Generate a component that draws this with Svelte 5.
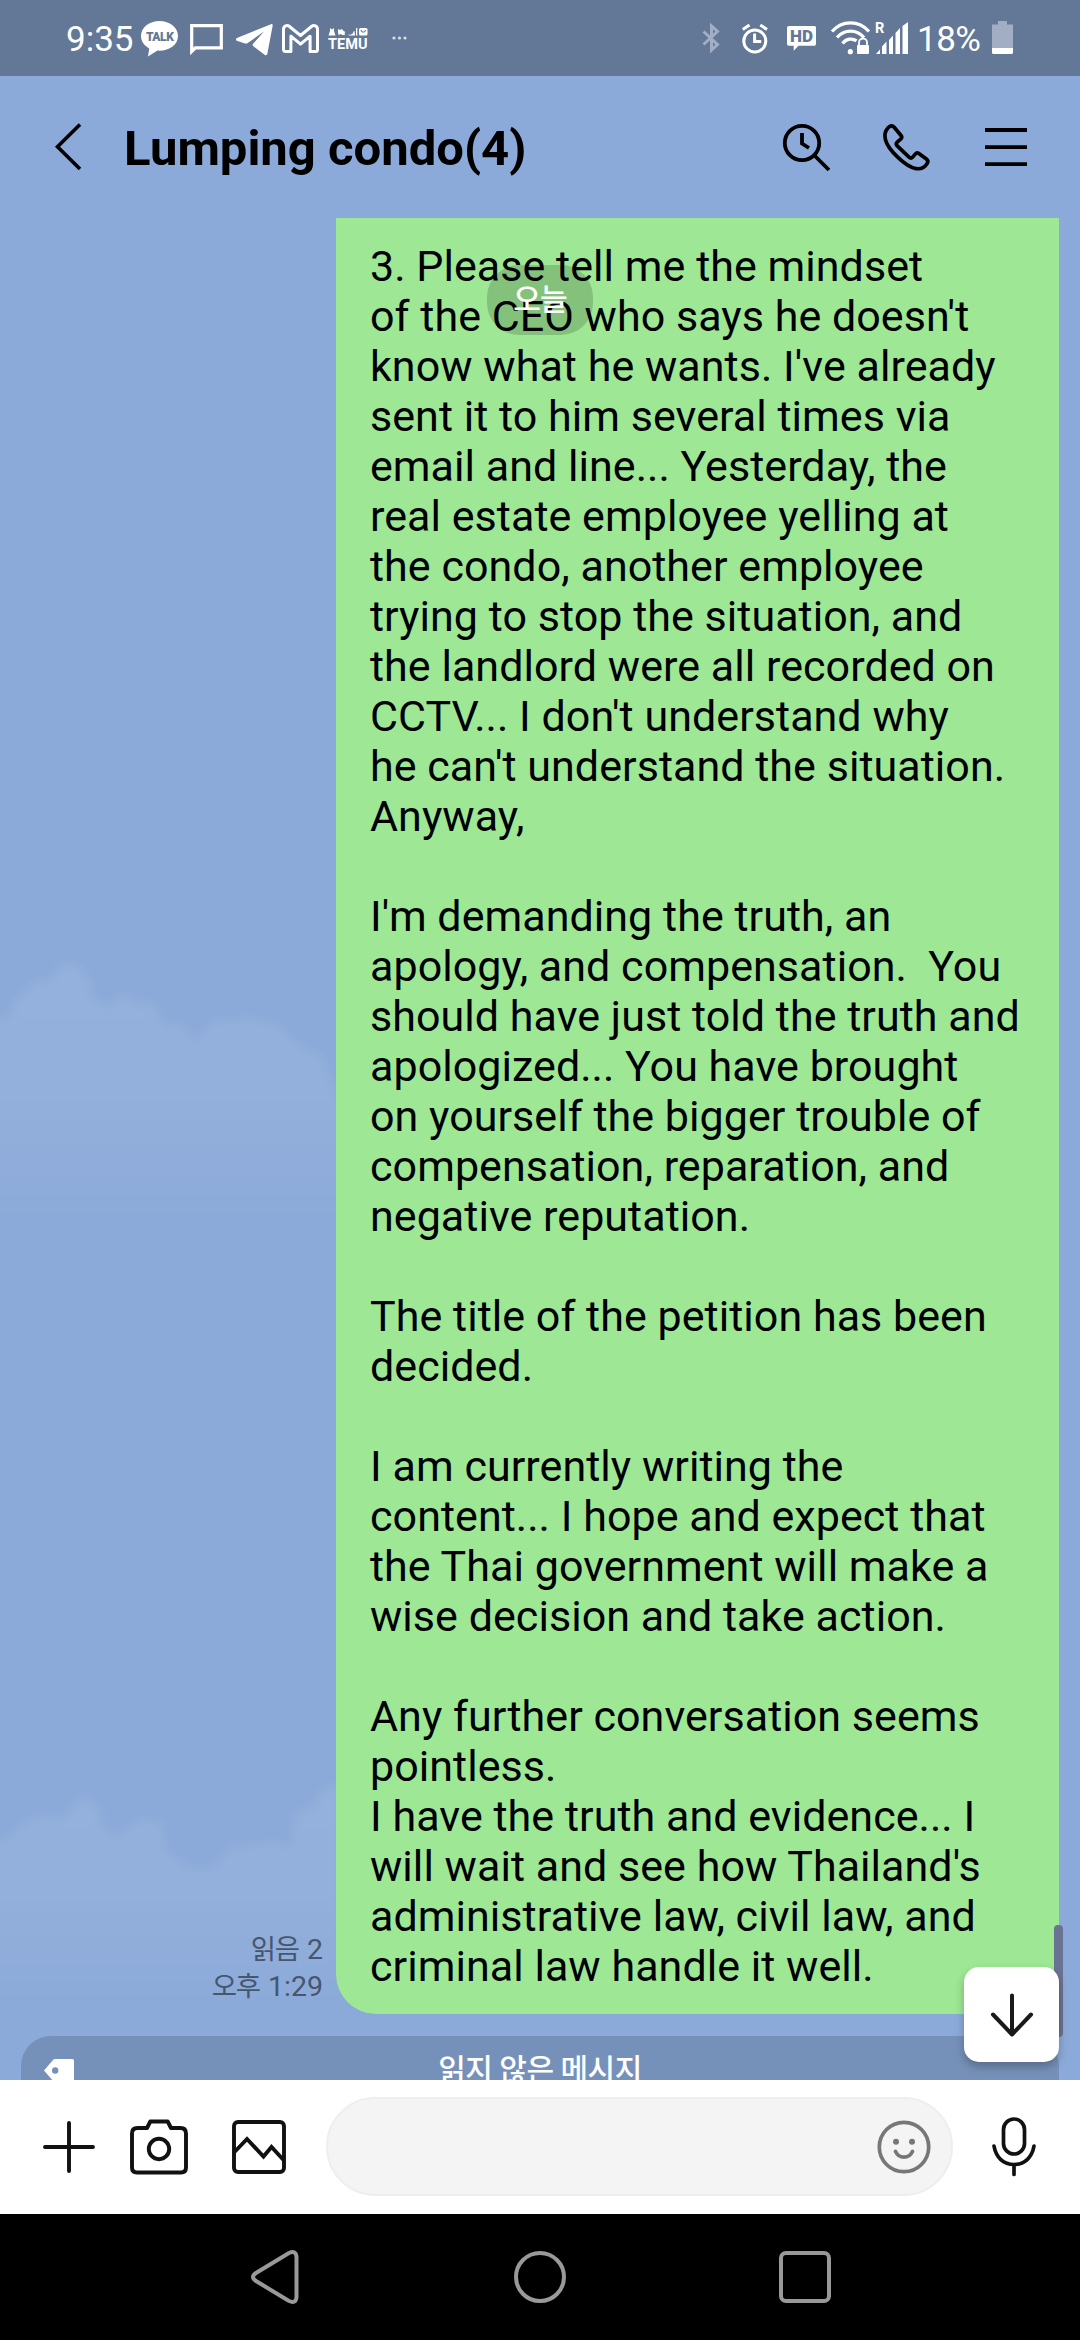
<script lang="ts">
  interface Props {
    title?: string;
    members?: number;
  }

  const { title = 'Lumping condo', members = 4 }: Props = $props();

  const lines = [
    '3. Please tell me the mindset',
    "of the CEO who says he doesn't",
    "know what he wants. I've already",
    'sent it to him several times via',
    'email and line... Yesterday, the',
    'real estate employee yelling at',
    'the condo, another employee',
    'trying to stop the situation, and',
    'the landlord were all recorded on',
    "CCTV... I don't understand why",
    "he can't understand the situation.",
    'Anyway,',
    '',
    "I'm demanding the truth, an",
    'apology, and compensation.  You',
    'should have just told the truth and',
    'apologized... You have brought',
    'on yourself the bigger trouble of',
    'compensation, reparation, and',
    'negative reputation.',
    '',
    'The title of the petition has been',
    'decided.',
    '',
    'I am currently writing the',
    'content... I hope and expect that',
    'the Thai government will make a',
    'wise decision and take action.',
    '',
    'Any further conversation seems',
    'pointless.',
    'I have the truth and evidence... I',
    "will wait and see how Thailand's",
    'administrative law, civil law, and',
    'criminal law handle it well.',
  ];
</script>

<div class="screen">
  <div class="status-bar">
    <div class="status-left">
      <span class="clock">9:35</span>
      <svg class="talk" width="37" height="36" viewBox="0 0 37 36">
        <path d="M18.500 0C8.300 0 0 6.500 0 15c0 5.300 3.300 9.700 8.200 12.400L7 35.600l9.500-6 2 .1C28.700 29.700 37 23.500 37 15S28.700 0 18.500 0z" fill="#fff" />
        <text x="18.700" y="20" text-anchor="middle">TALK</text>
      </svg>
      <svg class="msg" width="33" height="31" viewBox="0 0 33 31">
        <path d="M1.700 27.500V1.700h29.600v22.100H5.400z" fill="none" stroke="#fff" stroke-width="3.200" />
      </svg>
      <svg class="telegram" width="37" height="32" viewBox="0 0 37 32">
        <path d="M35 .2 1.500 13.800c-2 .8-2 2.600 0 3.300l7.500 2.300c1 .3 1.800.2 2.700-.4L28 7.600 17.300 19.500c-.9 1-1 2 .1 2.800l11.200 8.500c1.300 1 2.500.5 2.800-1.200L36.600 2c.3-1.500-.4-2.300-1.600-1.800z" fill="#fff" />
      </svg>
      <svg class="gmail" width="37" height="29" viewBox="0 0 37 29">
        <path d="M1.500 25.500V5.500c0-3.600 3.500-5 6-3l11 9 11-9c2.500-2 6-.6 6 3v20c0 1.200-.7 2-1.900 2h-5.500V12.200l-9.600 8-9.600-8v15.300H3.400c-1.200 0-1.900-.8-1.900-2z" fill="none" stroke="#fff" stroke-width="3" stroke-linejoin="round" />
      </svg>
      <svg class="temu" width="40" height="22" viewBox="0 0 40 22">
        <path d="M2 0l2 1.500L6 0v3l1.500 4.500h-7L2 3zM10 1l2 1 2-1 1.500 2 2 1-1 1 .5 2h-3l-1-1-2.500 1-.5-3zM20 6.500c2.500 1 5-.3 5.500-3l1-.5.500 4.500h-6zM28 0h1.300v7.500H28z" fill="#fff" />
        <rect x="31" y="0" width="8.500" height="7.500" rx="1.500" fill="#fff" />
        <path d="M33 2c.5 3 4 3 4.500 0" fill="none" stroke="#637797" stroke-width="1.100" />
        <text x="0" y="21.300" textLength="39.500" lengthAdjust="spacingAndGlyphs">TEMU</text>
      </svg>
      <svg class="dots" width="15" height="4" viewBox="0 0 15 4">
        <circle cx="2" cy="2" r="1.600" /><circle cx="7.500" cy="2" r="1.600" /><circle cx="13" cy="2" r="1.600" />
      </svg>
    </div>

    <div class="status-right">
      <svg class="bluetooth" width="18" height="30" viewBox="0 0 18 30">
        <path d="M1.500 8.500l14 13L9.500 27V3l6 5.500-14 13" fill="none" stroke="#a1aec3" stroke-width="3" />
      </svg>
      <svg class="alarm" width="26" height="30" viewBox="0 0 26 30">
        <g fill="none" stroke="#fff" stroke-width="3">
          <circle cx="12.800" cy="17" r="11" />
          <path d="M12.600 9.500v8h6.600M.8 5.500 7.500 1M25 5.500 18.300 1" />
        </g>
      </svg>
      <svg class="hd" width="30" height="26" viewBox="0 0 30 26">
        <path d="M2 0h25.500c1 0 1.500.7 1.500 1.800v16c0 1.200-.6 2-1.600 2H11.500l-4.800 5v-5H2c-1.200 0-2-.8-2-2v-16C0 .7.800 0 2 0z" fill="#fff" />
        <text x="14.500" y="15.900" text-anchor="middle">HD</text>
      </svg>
      <svg class="wifi" width="39" height="34" viewBox="0 0 39 34">
        <g fill="none" stroke="#fff" stroke-width="3.300">
          <path d="M1 10.500C11-1 28-1 38 10.500" />
          <path d="M6 16.500c7.500-8.500 19.500-8.500 27 0" />
          <path d="M11.500 22.500c4-5 10-5.600 14-2.600" />
        </g>
        <circle cx="19.300" cy="30.700" r="2.600" fill="#fff" />
        <path d="M28 24v-2.500a4 4 0 0 1 8 0V24" fill="none" stroke="#fff" stroke-width="1.800" />
        <rect x="26" y="24" width="12" height="9" rx="1" fill="#fff" />
      </svg>
      <svg class="signal" width="34" height="33" viewBox="0 0 34 33">
        <text x="0" y="10.500">R</text>
        <path d="M1 32l4-4.500V32zM7 32v-7.500l4.500-5V32zM14 32V18l4-4.500V32zM20.500 32V11l4.500-5v26zM27.500 32V4L33 0v32z" fill="#fff" />
      </svg>
      <span class="percent">18%</span>
      <svg class="battery" width="21" height="33" viewBox="0 0 21 33">
        <path d="M6 0h9v3.500h6V27H0V3.500h6z" fill="#a1aec3" />
        <path d="M0 27h21v4.500q0 1.500-1.500 1.500h-18Q0 33 0 31.500z" fill="#fff" />
      </svg>
    </div>
  </div>

  <header class="chat-header">
    <svg class="back" width="27" height="48" viewBox="0 0 27 48">
      <path d="M25 1.500 2.500 23.700 25 46" fill="none" stroke="#000" stroke-width="3.600" />
    </svg>
    <h1 class="chat-title">{title}({members})</h1>
    <div class="header-actions">
      <svg width="48" height="48" viewBox="0 0 48 48">
        <g fill="none" stroke="#000" stroke-width="3.800">
          <circle cx="19" cy="20" r="17.200" />
          <path d="M19 10v10.500l7 4.500M31.500 32.500 46 47" />
        </g>
      </svg>
      <svg class="call" width="48" height="48" viewBox="0 0 48 48">
        <path d="M4.700 5.200C7 2.300 9.300 2 11.200 4.300l6.800 8.200c1.100 1.400 1 2.300-.1 3.400l-3.700 3.300c-1.300 1.200-1.300 2.200-.2 3.500L26 34.200c1.500 1.300 2.500 1.200 3.700-.1l2.500-3c1.200-1.500 2.200-1.700 3.700-.6l7.500 5.600c1.600 1.200 1.800 2.700.8 4.300-2.400 4.200-6.400 5.900-11.200 5.200C22.500 44 4.800 26.500 2.400 16.500c-1-4.300-.2-8.500 2.300-11.300z" fill="none" stroke="#000" stroke-width="3.700" stroke-linejoin="round" />
      </svg>
      <svg class="menu" width="42" height="48" viewBox="0 0 42 48">
        <path d="M0 7h42M0 24.100h42M0 41.200h42" stroke="#000" stroke-width="3.800" />
      </svg>
    </div>
  </header>

  <main class="chat">
    <svg class="clouds" width="1080" height="1862" viewBox="0 0 1080 1862">
      <defs>
        <linearGradient id="haze" x1="0" y1="0" x2="0" y2="1">
          <stop offset="0" stop-color="#fff" stop-opacity=".07" />
          <stop offset=".5" stop-color="#fff" stop-opacity=".06" />
          <stop offset="1" stop-color="#fff" stop-opacity="0" />
        </linearGradient>
        <filter id="soft"><feGaussianBlur stdDeviation="4" /></filter>
      </defs>
      <g fill="url(#haze)" filter="url(#soft)">
        <path d="M-20 800 8 800 14 784 34 764 50 762 58 748 76 746 90 762 92 778 108 788 118 780 130 778 140 786 154 784 164 806 184 808 194 824 212 804 250 800 278 808 300 828 322 838 336 874 350 920V1010H-20z" />
        <path d="M-20 1630 8 1618 32 1600 68 1598 76 1582 90 1580 100 1592 104 1612 120 1618 140 1602 162 1604 166 1634 190 1650 212 1650 230 1630 276 1624 290 1630 296 1594 312 1590 320 1574 340 1566V1790H-20z" />
      </g>
    </svg>

    <div class="message">
      <div class="message-meta">
        <span>읽음 <b>2</b></span>
        <span>오후 <b>1:29</b></span>
      </div>
      <div class="bubble">
        {#each lines as line}
          <p class="bubble-line">{line}</p>
        {/each}
      </div>
    </div>

    <div class="unread">
      <svg class="tag" width="30" height="34" viewBox="0 0 30 34">
        <path fill-rule="evenodd" d="M0 11.500 9 1q.8-1 2-1h17.500Q30 0 30 1.500V23H10z M8 11.500a3.200 3.200 0 1 0 6.400 0a3.200 3.200 0 1 0-6.400 0z" fill="#fff" />
      </svg>
      <span class="unread-label">읽지 않은 메시지</span>
    </div>

    <div class="date-pill">오늘</div>
    <div class="scroll-thumb"></div>
    <button class="jump-down" aria-label="아래로">
      <svg width="44" height="44" viewBox="0 0 44 44">
        <path d="M22 2.500V41M3 21.500 22 41.500l19-20" fill="none" stroke="#1a1a1a" stroke-width="4" stroke-linecap="round" stroke-linejoin="round" />
      </svg>
    </button>
  </main>

  <div class="composer">
    <svg class="plus" width="52" height="52" viewBox="0 0 52 52">
      <path d="M26 2v48M2 26h48" stroke="#111" stroke-width="3.900" stroke-linecap="round" />
    </svg>
    <svg class="camera" width="58" height="56" viewBox="0 0 58 56">
      <g fill="none" stroke="#111" stroke-width="3.900" stroke-linejoin="round">
        <path d="M7.500 9H17l3.300-6.500h17.400L41 9h9.500q5.500 0 5.500 5.500v34q0 5-5 5H7q-5 0-5-5v-34Q2 9 7.500 9z" />
        <circle cx="29" cy="30" r="10.200" />
      </g>
    </svg>
    <svg class="gallery" width="54" height="54" viewBox="0 0 54 54">
      <g fill="none" stroke="#111" stroke-width="3.900">
        <rect x="2" y="2" width="50" height="50" rx="4" />
        <path d="M2.500 32 15 19l16.500 17.500 8-9.500L52 40.500" />
      </g>
    </svg>
    <div class="input">
      <svg width="54" height="54" viewBox="0 0 54 54">
        <g fill="none" stroke="#777" stroke-width="3.700" stroke-linecap="round">
          <circle cx="27" cy="27" r="24.700" />
          <path d="M18.500 31.500c3.500 7.500 13.500 7.500 17 0" />
        </g>
        <circle cx="19" cy="21.700" r="3" fill="#777" />
        <circle cx="35" cy="21.700" r="3" fill="#777" />
      </svg>
    </div>
    <svg class="mic" width="44" height="60" viewBox="0 0 44 60">
      <g fill="none" stroke="#111" stroke-width="3.700" stroke-linecap="round">
        <rect x="11.500" y="2" width="21" height="35" rx="10.500" />
        <path d="M2 29c2 11.500 9.500 18.500 20 18.500S40 40.500 42 29M22 48v9.500" />
      </g>
    </svg>
  </div>

  <nav class="system-nav">
    <svg width="54" height="54" viewBox="0 0 54 54">
      <path d="M41 3 8 23q-6 4 0 8l33 20q7 3 7.500-4V7q-.5-7-7.500-4z" fill="none" stroke="#999" stroke-width="4" />
    </svg>
    <svg width="54" height="54" viewBox="0 0 54 54">
      <circle cx="27" cy="27" r="24" fill="none" stroke="#999" stroke-width="4" />
    </svg>
    <svg width="54" height="54" viewBox="0 0 54 54">
      <rect x="3" y="3" width="48" height="48" rx="5" fill="none" stroke="#999" stroke-width="4" />
    </svg>
  </nav>
</div>

<style>
  :global(body) {
    background: #000;
  }

  .screen {
    display: flex;
    flex-direction: column;
    width: 1080px;
    height: 2340px;
    overflow: hidden;
    font-family: Roboto, "Noto Sans CJK KR", sans-serif;
    background: #8caad9;
  }

  svg {
    display: block;
    flex-shrink: 0;
    overflow: visible;
  }

  .status-bar {
    display: flex;
    justify-content: space-between;
    height: 76px;
    flex-shrink: 0;
    box-sizing: border-box;
    padding: 0 67px 0 66px;
    background: #637797;
    color: #fff;
  }

  .status-left,
  .status-right {
    display: flex;
    align-items: flex-start;
  }

  .clock,
  .percent {
    font-size: 35px;
    line-height: 41px;
    padding-top: 19px;
  }

  .clock { width: 75px; }
  .percent { margin-left: 8px; width: 75px; letter-spacing: -0.5px; }

  .talk { margin-top: 21px; }
  .talk text { font-size: 12px; font-weight: 900; letter-spacing: -0.4px; fill: #637797; }
  .msg { margin: 24px 0 0 12px; }
  .telegram { margin: 24px 0 0 13px; }
  .gmail { margin: 24px 0 0 9px; }
  .temu { margin: 28px 0 0 9px; }
  .temu text { font-size: 14px; font-weight: 700; fill: #fff; }
  .dots { margin: 36px 0 0 24px; fill: #d8dde5; }

  .bluetooth { margin-top: 23px; }
  .alarm { margin: 24px 0 0 22px; }
  .hd { margin: 26px 0 0 19px; }
  .hd text { font-size: 17px; font-weight: 900; fill: #637797; }
  .wifi { margin: 21px 0 0 14px; }
  .signal { margin: 22px 0 0 5px; }
  .signal text { font-size: 14.5px; font-weight: 700; fill: #fff; }
  .battery { margin-top: 21px; }

  .chat-header {
    display: flex;
    align-items: flex-start;
    height: 142px;
    flex-shrink: 0;
    box-sizing: border-box;
    padding: 47px 53px 0 55px;
  }

  .chat-title {
    flex: 1;
    margin: 1px 0 0 42px;
    font-size: 49px;
    font-weight: 700;
    line-height: 50px;
    color: #000;
  }

  .header-actions {
    display: flex;
  }

  .call { margin-left: 52px; }
  .menu { margin-left: 54px; }

  .chat {
    position: relative;
    flex: 1;
    overflow: hidden;
  }

  .clouds {
    position: absolute;
    inset: 0;
  }

  .message {
    position: relative;
    display: flex;
    justify-content: flex-end;
    align-items: flex-end;
    padding-right: 21px;
  }

  .message-meta {
    display: flex;
    flex-direction: column;
    align-items: flex-end;
    margin: 0 13px 9px 0;
    font-size: 27.5px;
    line-height: 37px;
    letter-spacing: -1.2px;
    word-spacing: 1.5px;
    color: #46566f;
  }

  .message-meta b {
    margin-left: 1px;
    font-size: 28.5px;
    font-weight: 400;
    letter-spacing: 0;
  }

  .bubble {
    width: 723px;
    box-sizing: border-box;
    padding: 23px 0 23px 34px;
    border-radius: 0 0 40px 40px;
    background: #9ee794;
  }

  .bubble-line {
    height: 50px;
    margin: 0;
    font-size: 43px;
    line-height: 50px;
    letter-spacing: 0.05px;
    white-space: pre;
    color: #000;
  }

  .unread {
    position: relative;
    display: flex;
    justify-content: center;
    height: 88px;
    margin: 22px 21px 0;
    border-radius: 30px;
    background: #7691b9;
    color: #fff;
  }

  .tag {
    position: absolute;
    left: 23px;
    top: 23px;
  }

  .unread-label {
    padding-top: 14px;
    font-size: 30px;
    font-weight: 500;
    line-height: 40px;
    letter-spacing: -0.5px;
  }

  .date-pill {
    position: absolute;
    left: 487px;
    top: 47px;
    width: 106px;
    height: 70px;
    border-radius: 32px;
    background: rgba(0, 0, 0, 0.16);
    font-size: 30px;
    font-weight: 500;
    line-height: 70px;
    letter-spacing: -0.8px;
    text-align: center;
    color: #fff;
  }

  .scroll-thumb {
    position: absolute;
    right: 17px;
    top: 1707px;
    width: 9px;
    height: 112px;
    border-radius: 4px;
    background: #6a7391;
  }

  .jump-down {
    position: absolute;
    right: 21px;
    top: 1749px;
    display: flex;
    align-items: center;
    justify-content: center;
    width: 95px;
    height: 95px;
    padding: 0;
    border: none;
    border-radius: 15px;
    background: #fff;
    box-shadow: 0 5px 10px rgba(0, 0, 0, 0.25);
  }

  .composer {
    display: flex;
    align-items: center;
    height: 134px;
    flex-shrink: 0;
    box-sizing: border-box;
    padding: 0 44px 0 43px;
    background: #fff;
  }

  .camera { margin-left: 35px; }
  .gallery { margin-left: 44px; }

  .input {
    display: flex;
    align-items: center;
    justify-content: flex-end;
    flex: 1;
    height: 99px;
    box-sizing: border-box;
    margin: 0 39px 1px 40px;
    padding-right: 20px;
    border: 2px solid #eee;
    border-radius: 50px;
    background: #f4f4f4;
  }

  .system-nav {
    display: flex;
    justify-content: center;
    gap: 211px;
    height: 126px;
    flex-shrink: 0;
    box-sizing: border-box;
    padding-top: 36px;
    background: #000;
  }
</style>
